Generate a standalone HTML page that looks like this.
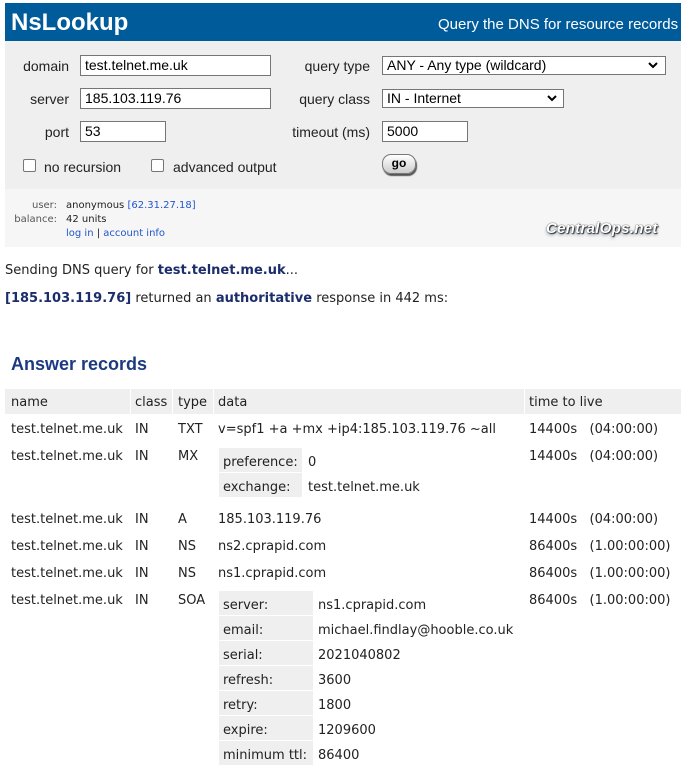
<!DOCTYPE html>
<html><head><meta charset="utf-8"><style>
*{margin:0;padding:0;box-sizing:border-box}
body{width:687px;height:773px;background:#fff;font-family:"DejaVu Sans","Liberation Sans",sans-serif;font-size:13px;color:#222;position:relative;overflow:hidden}
.a{position:absolute;white-space:nowrap;line-height:16px;margin-top:2px}
.bx{position:absolute}
.in{position:absolute;background:#fff;border:1px solid #767676;height:21px;padding-left:4px;line-height:19px;font-size:14px;font-family:"Liberation Sans",sans-serif;color:#000}
.lab{position:absolute;line-height:16px;text-align:right;font-family:"Liberation Sans",sans-serif;font-size:14px;color:#222}
.cb{position:absolute;width:13px;height:13px;border:1px solid #767676;border-radius:2px;background:#fff}
.b{font-weight:bold;color:#1c2d6b}
.g{position:absolute;background:#efefef}
.sm{font-size:10px;font-family:"DejaVu Sans",sans-serif}
.lk{color:#2255cc}
</style></head><body>
<div class="bx" style="left:5px;top:3px;width:676px;height:38px;background:#005b9a"></div>
<div class="a" style="left:11px;top:8px;font:bold 24px/26px 'Liberation Sans',sans-serif;color:#fff">NsLookup</div>
<div class="a" style="left:438px;top:15px;font:15px/16px 'Liberation Sans',sans-serif;color:#fff">Query the DNS for resource records</div>
<div class="bx" style="left:5px;top:41px;width:676px;height:148px;background:#efefef"></div>
<div class="bx" style="left:5px;top:189px;width:676px;height:58px;background:#f6f6f6"></div>

<div class="lab" style="left:0;width:69px;top:58px">domain</div>
<div class="lab" style="left:0;width:69px;top:91px">server</div>
<div class="lab" style="left:0;width:69px;top:124px">port</div>
<div class="lab" style="left:250px;width:120px;top:58px">query type</div>
<div class="lab" style="left:250px;width:120px;top:91px">query class</div>
<div class="lab" style="left:250px;width:120px;top:124px">timeout (ms)</div>
<div class="in" style="left:80px;top:55px;width:191px">test.telnet.me.uk</div>
<div class="in" style="left:80px;top:88px;width:191px">185.103.119.76</div>
<div class="in" style="left:80px;top:121px;width:86px">53</div>
<div class="in" style="left:382px;top:121px;width:86px">5000</div>
<div class="in" style="left:382px;top:56px;width:284px;height:19px;line-height:17px">ANY - Any type (wildcard)</div>
<div class="in" style="left:382px;top:89px;width:182px;height:19px;line-height:17px">IN - Internet</div>
<svg style="position:absolute;left:648px;top:61px" width="10" height="8"><path d="M1 2 L5 6 L9 2" stroke="#000" stroke-width="2" fill="none"/></svg>
<svg style="position:absolute;left:547px;top:94px" width="10" height="8"><path d="M1 2 L5 6 L9 2" stroke="#000" stroke-width="2" fill="none"/></svg>
<div class="cb" style="left:23px;top:159px"></div>
<div class="lab" style="left:44px;top:159px;text-align:left">no recursion</div>
<div class="cb" style="left:151px;top:159px"></div>
<div class="lab" style="left:173px;top:159px;text-align:left">advanced output</div>
<div class="bx" style="left:382px;top:154px;width:34px;height:20px;border-radius:9px;background:linear-gradient(#fff,#ccc);border:1px solid #777;box-shadow:1px 2px 1px #555;font:bold 12px/17px 'Liberation Sans',sans-serif;text-align:center;color:#000">go</div>

<div class="a sm" style="left:0;width:57px;text-align:right;top:196px;color:#555">user:</div>
<div class="a sm" style="left:0;width:57px;text-align:right;top:210px;color:#555">balance:</div>
<div class="a sm" style="left:66px;top:196px">anonymous <span class="lk">[62.31.27.18]</span></div>
<div class="a sm" style="left:66px;top:210px">42 units</div>
<div class="a sm lk" style="left:66px;top:224px">log in <span style="color:#222">|</span> account info</div>
<div class="a" style="left:546px;top:219px;font:italic bold 15px/16px 'Liberation Sans',sans-serif;letter-spacing:0.3px;color:#fff;text-shadow:0 0 1px #000,1px 1px 1px #333,0 2px 3px #89a">CentralOps.net</div>

<div class="a" style="left:5px;top:261px">Sending DNS query for <span class="b">test.telnet.me.uk</span>...</div>
<div class="a" style="left:5px;top:289px"><span class="b">[185.103.119.76]</span> returned an <span class="b">authoritative</span> response in 442 ms:</div>
<div class="a" style="left:11px;top:352px;font:bold 18px/20px 'Liberation Sans',sans-serif;color:#1c3a80">Answer records</div>

<div class="g" style="left:5px;top:389px;width:125px;height:25px"></div>
<div class="g" style="left:131px;top:389px;width:41px;height:25px"></div>
<div class="g" style="left:173px;top:389px;width:40px;height:25px"></div>
<div class="g" style="left:214px;top:389px;width:310px;height:25px"></div>
<div class="g" style="left:525px;top:389px;width:156px;height:25px"></div>
<div class="a" style="left:11px;top:393px">name</div>
<div class="a" style="left:135px;top:393px">class</div>
<div class="a" style="left:178px;top:393px">type</div>
<div class="a" style="left:218px;top:393px">data</div>
<div class="a" style="left:529px;top:393px">time to live</div>

<div class="a" style="left:11px;top:420px">test.telnet.me.uk</div><div class="a" style="left:135px;top:420px">IN</div><div class="a" style="left:178px;top:420px">TXT</div><div class="a" style="left:218px;top:420px">v=spf1 +a +mx +ip4:185.103.119.76 ~all</div><div class="a" style="left:529px;top:420px">14400s&nbsp;&nbsp; (04:00:00)</div>
<div class="a" style="left:11px;top:447px">test.telnet.me.uk</div><div class="a" style="left:135px;top:447px">IN</div><div class="a" style="left:178px;top:447px">MX</div><div class="a" style="left:529px;top:447px">14400s&nbsp;&nbsp; (04:00:00)</div>
<div class="g" style="left:219px;top:448px;width:83px;height:24px"></div>
<div class="g" style="left:219px;top:473px;width:83px;height:24px"></div>
<div class="a" style="left:223px;top:453px">preference:</div><div class="a" style="left:308px;top:453px">0</div>
<div class="a" style="left:223px;top:478px">exchange:</div><div class="a" style="left:308px;top:478px">test.telnet.me.uk</div>

<div class="a" style="left:11px;top:510px">test.telnet.me.uk</div><div class="a" style="left:135px;top:510px">IN</div><div class="a" style="left:178px;top:510px">A</div><div class="a" style="left:218px;top:510px">185.103.119.76</div><div class="a" style="left:529px;top:510px">14400s&nbsp;&nbsp; (04:00:00)</div>
<div class="a" style="left:11px;top:537px">test.telnet.me.uk</div><div class="a" style="left:135px;top:537px">IN</div><div class="a" style="left:178px;top:537px">NS</div><div class="a" style="left:218px;top:537px">ns2.cprapid.com</div><div class="a" style="left:529px;top:537px">86400s&nbsp;&nbsp; (1.00:00:00)</div>
<div class="a" style="left:11px;top:564px">test.telnet.me.uk</div><div class="a" style="left:135px;top:564px">IN</div><div class="a" style="left:178px;top:564px">NS</div><div class="a" style="left:218px;top:564px">ns1.cprapid.com</div><div class="a" style="left:529px;top:564px">86400s&nbsp;&nbsp; (1.00:00:00)</div>
<div class="a" style="left:11px;top:591px">test.telnet.me.uk</div><div class="a" style="left:135px;top:591px">IN</div><div class="a" style="left:178px;top:591px">SOA</div><div class="a" style="left:529px;top:591px">86400s&nbsp;&nbsp; (1.00:00:00)</div>

<div class="g" style="left:219px;top:591px;width:94px;height:24px"></div>
<div class="g" style="left:219px;top:616px;width:94px;height:24px"></div>
<div class="g" style="left:219px;top:641px;width:94px;height:24px"></div>
<div class="g" style="left:219px;top:666px;width:94px;height:24px"></div>
<div class="g" style="left:219px;top:691px;width:94px;height:24px"></div>
<div class="g" style="left:219px;top:716px;width:94px;height:24px"></div>
<div class="g" style="left:219px;top:741px;width:94px;height:24px"></div>
<div class="a" style="left:223px;top:596px">server:</div><div class="a" style="left:318px;top:596px">ns1.cprapid.com</div>
<div class="a" style="left:223px;top:621px">email:</div><div class="a" style="left:318px;top:621px">michael.findlay@hooble.co.uk</div>
<div class="a" style="left:223px;top:646px">serial:</div><div class="a" style="left:318px;top:646px">2021040802</div>
<div class="a" style="left:223px;top:671px">refresh:</div><div class="a" style="left:318px;top:671px">3600</div>
<div class="a" style="left:223px;top:696px">retry:</div><div class="a" style="left:318px;top:696px">1800</div>
<div class="a" style="left:223px;top:721px">expire:</div><div class="a" style="left:318px;top:721px">1209600</div>
<div class="a" style="left:223px;top:746px">minimum ttl:</div><div class="a" style="left:318px;top:746px">86400</div>
</body></html>
